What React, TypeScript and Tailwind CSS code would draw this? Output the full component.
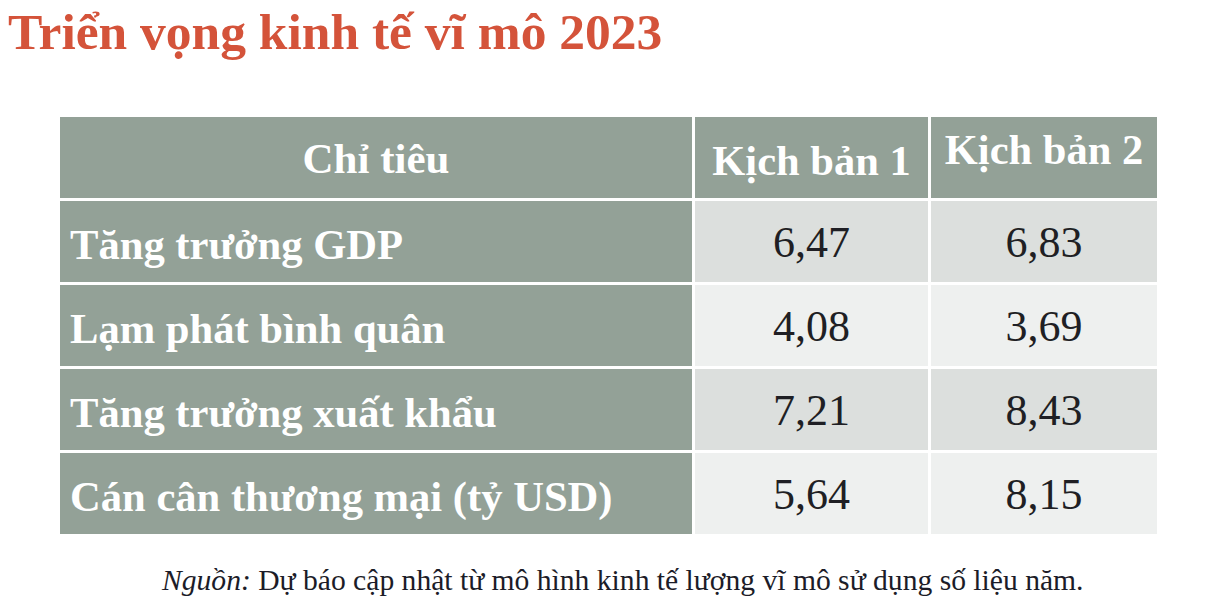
const rows = [
  { label: "Tăng trưởng GDP", a: "6,47", b: "6,83", shade: "bg-[#dcdfdd]" },
  { label: "Lạm phát bình quân", a: "4,08", b: "3,69", shade: "bg-[#eef0ef]" },
  { label: "Tăng trưởng xuất khẩu", a: "7,21", b: "8,43", shade: "bg-[#dcdfdd]" },
  { label: "Cán cân thương mại (tỷ USD)", a: "5,64", b: "8,15", shade: "bg-[#eef0ef]" },
];

const serif = "font-['Liberation_Serif','DejaVu_Serif',serif]";

export default function App() {
  return (
    <div className={`w-[1210px] h-[604px] bg-white overflow-hidden ${serif}`}>
      <h1 className="pl-[8px] pt-[4px] text-[51.5px] leading-[56px] font-bold text-[#d4533a]">
        Triển vọng kinh tế vĩ mô 2023
      </h1>

      <div className="mt-[57px] ml-[60px] w-[1097px] grid grid-cols-[632px_233px_226px] gap-[3px] bg-white">
        {/* header */}
        <div className="h-[81px] bg-[#93a197] flex items-center justify-center pt-[4px] text-white font-bold text-[43px]">
          Chỉ tiêu
        </div>
        <div className="h-[81px] bg-[#93a197] flex items-center justify-center pt-[6px] text-white font-bold text-[42.5px]">
          Kịch bản 1
        </div>
        <div className="h-[81px] bg-[#93a197] flex items-start justify-center pt-[1px] text-white font-bold text-[42.5px]">
          Kịch bản 2
        </div>

        {rows.map((r) => (
          <>
            <div key={r.label} className="h-[81px] bg-[#93a197] flex items-center pl-[10px] pt-[6px] text-white font-bold text-[42.6px]">
              {r.label}
            </div>
            <div className={`h-[81px] ${r.shade} flex items-center justify-center pt-[2px] text-[#1f1f24] text-[44px]`}>
              {r.a}
            </div>
            <div className={`h-[81px] ${r.shade} flex items-center justify-center pt-[2px] text-[#1f1f24] text-[44px]`}>
              {r.b}
            </div>
          </>
        ))}
      </div>

      <p className="mt-[31px] pl-[162px] text-[29.6px] leading-[30px] text-[#1c1c28]">
        <i>Nguồn:</i> Dự báo cập nhật từ mô hình kinh tế lượng vĩ mô sử dụng số liệu năm.
      </p>
    </div>
  );
}
